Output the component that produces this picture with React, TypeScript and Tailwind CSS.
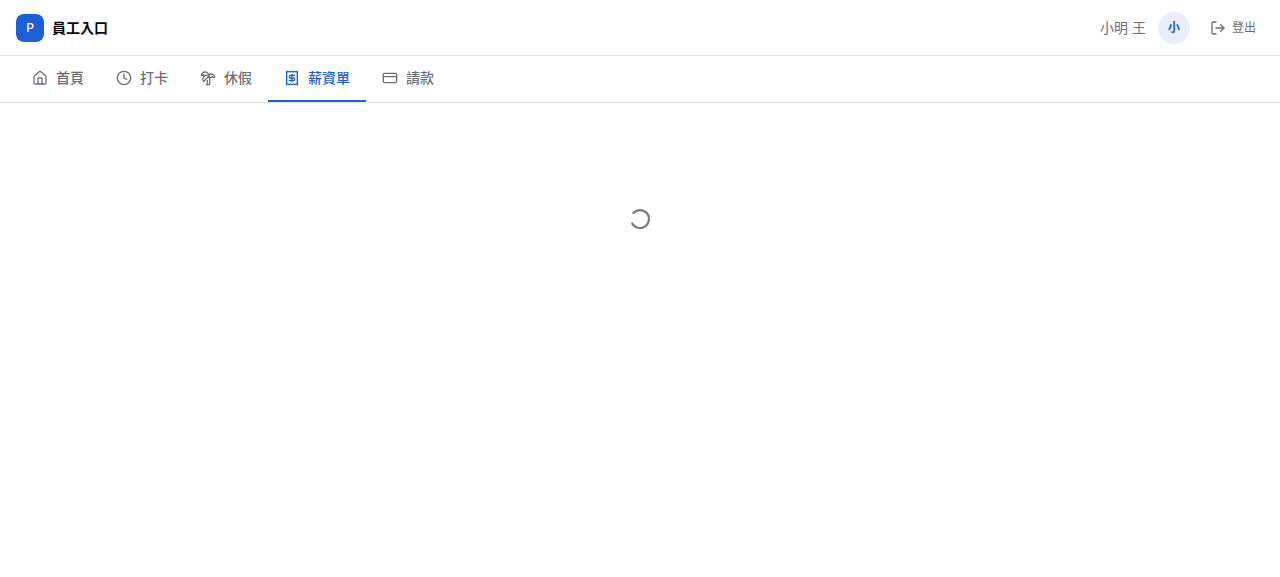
import {
  Clock,
  CreditCard,
  House,
  Loader2,
  LogOut,
  Receipt,
  TreePalm,
} from "lucide-react";
import { clsx } from "clsx";

const navItems = [
  { title: "首頁", href: "#home", icon: House },
  { title: "打卡", href: "#clock", icon: Clock },
  { title: "休假", href: "#leave", icon: TreePalm },
  { title: "薪資單", href: "#payslips", icon: Receipt },
  { title: "請款", href: "#expenses", icon: CreditCard },
];

const activeHref = "#payslips";

function Header({ name }: { name: string }) {
  return (
    <header className="flex h-14 items-center justify-between border-b border-[#e2e3e6] px-4">
      <div className="flex items-center gap-2">
        <div className="flex size-7 items-center justify-center rounded-lg bg-[#1f5fd6] text-xs font-medium text-white">
          P
        </div>
        <span className="text-sm font-semibold text-[#09090b]">員工入口</span>
      </div>
      <div className="flex items-center gap-3">
        <span className="text-sm text-[#6b6f78]">{name}</span>
        <div className="flex size-8 items-center justify-center rounded-full bg-[#e8eefb] text-xs font-semibold text-[#1f5fd6]">
          {name[0]}
        </div>
        <button
          type="button"
          className="flex h-8 items-center gap-1.5 rounded-md px-2 text-xs text-[#6b6f78]"
        >
          <LogOut className="size-4" />
          登出
        </button>
      </div>
    </header>
  );
}

function Nav() {
  return (
    <nav className="flex border-b border-[#e2e3e6] px-4">
      {navItems.map((item) => {
        const active = item.href === activeHref;
        return (
          <a
            key={item.href}
            href={item.href}
            aria-current={active ? "page" : undefined}
            className={clsx(
              "flex items-center gap-2 border-b-2 px-4 py-3 text-sm font-medium",
              active
                ? "border-[#1f5fd6] text-[#1f5fd6]"
                : "border-transparent text-[#6b6f78]",
            )}
          >
            <item.icon className="size-4" />
            {item.title}
          </a>
        );
      })}
    </nav>
  );
}

export default function App() {
  return (
    <div className="min-h-screen bg-white font-['Inter','Noto_Sans_CJK_TC',sans-serif]">
      <Header name="小明 王" />
      <Nav />
      <main className="p-6">
        <div className="flex justify-center py-20" role="status">
          <Loader2
            className="size-6 rotate-[223deg] text-[#7b7f87]"
            strokeWidth={2.25}
          />
        </div>
      </main>
    </div>
  );
}
